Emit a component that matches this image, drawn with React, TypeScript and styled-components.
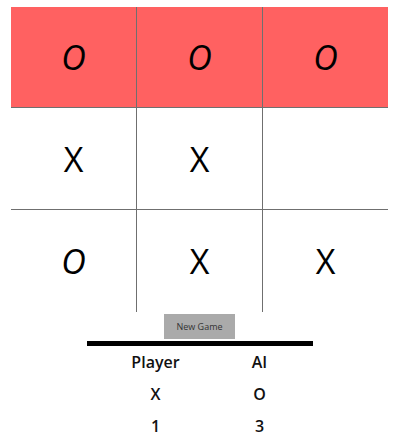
import { createGlobalStyle } from 'styled-components';
import styled from 'styled-components';

type Mark = 'X' | 'O' | '';

const board: Mark[] = ['O', 'O', 'O', 'X', 'X', '', 'O', 'X', 'X'];
const winning = [0, 1, 2];

const GlobalStyle = createGlobalStyle`
  html, body {
    margin: 0;
    padding: 0;
    background: #ffffff;
    font-family: "Open Sans", "Noto Sans", sans-serif;
  }
`;

export default function App() {
  return (
    <Page>
      <GlobalStyle />
      <Board>
        {board.map((mark, i) => (
          <Cell
            key={i}
            $win={winning.includes(i)}
            $right={i % 3 !== 2}
            $bottom={i < 6}
          >
            <Glyph $o={mark === 'O'}>{mark}</Glyph>
          </Cell>
        ))}
      </Board>
      <NewGameButton>New Game</NewGameButton>
      <Divider />
      <Score>
        <ScoreCell>Player</ScoreCell>
        <ScoreCell>AI</ScoreCell>
        <ScoreCell>X</ScoreCell>
        <ScoreCell>O</ScoreCell>
        <ScoreCell>1</ScoreCell>
        <ScoreCell>3</ScoreCell>
      </Score>
    </Page>
  );
}

const Page = styled.div`
  width: 377px;
  padding: 7px 0 0 11px;
  display: flex;
  flex-direction: column;
  align-items: center;
`;

const Board = styled.div`
  display: grid;
  grid-template-columns: 126px 126px 125px;
  grid-template-rows: 101px 102px 102px;
`;

const Cell = styled.div<{ $win: boolean; $right: boolean; $bottom: boolean }>`
  display: flex;
  align-items: center;
  justify-content: center;
  background: ${(p) => (p.$win ? '#ff6161' : 'transparent')};
  border-right: ${(p) => (p.$right ? '1px solid #6f6f6f' : 'none')};
  border-bottom: ${(p) => (p.$bottom ? '1px solid #6f6f6f' : 'none')};
`;

const Glyph = styled.span<{ $o: boolean }>`
  font-size: 34px;
  font-style: ${(p) => (p.$o ? 'italic' : 'normal')};
  color: #000;
  line-height: 1;
`;

const NewGameButton = styled.button`
  margin-top: 2px;
  width: 71px;
  height: 25px;
  padding: 0;
  border: none;
  background: #aaaaaa;
  color: #333;
  font-family: "Open Sans", "Noto Sans", sans-serif;
  font-size: 9px;
  cursor: pointer;
`;

const Divider = styled.div`
  margin-top: 2px;
  width: 226px;
  height: 5px;
  background: #000;
`;

const Score = styled.div`
  width: 226px;
  padding-left: 17px;
  box-sizing: border-box;
  display: grid;
  grid-template-columns: 104px 104px;
  grid-auto-rows: 32px;
`;

const ScoreCell = styled.div`
  display: flex;
  align-items: center;
  justify-content: center;
  font-size: 16px;
  font-weight: 600;
  color: #111;
`;
